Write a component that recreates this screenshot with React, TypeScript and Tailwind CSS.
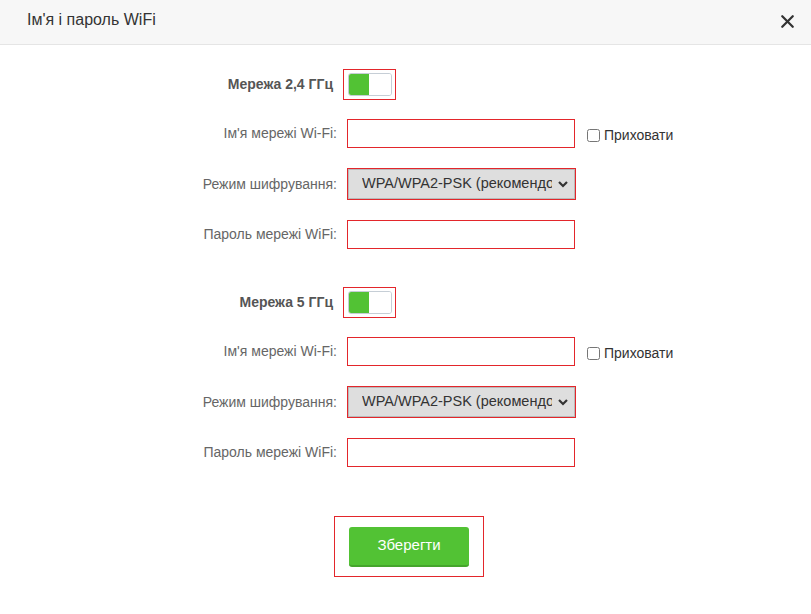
import { X } from "lucide-react";

const FONT = { fontFamily: '"Liberation Sans", Arial, sans-serif' };

function Toggle() {
    return (
        <div className="w-[53px] h-[31px] border border-[#e3262b] flex items-center justify-center">
            <div className="w-[44px] h-[23px] rounded-[3px] border border-[#c6ced6] flex overflow-hidden bg-white">
                <div className="w-[20px] h-full bg-[#52c234]" />
                <div className="flex-1 h-full bg-white" />
            </div>
        </div>
    );
}

function Label({ children }: { children: React.ReactNode }) {
    return <label className="text-right text-[14px] text-[#666] self-center">{children}</label>;
}

function TextField() {
    return <input type="text" className="w-[228px] h-[29px] border border-[#e3262b] bg-white px-2 text-[14px] outline-none" />;
}

function SelectField() {
    return (
        <div className="relative w-[229px] h-[32px] border border-[#e3262b] bg-[#dedede]">
            <select className="appearance-none w-full h-full bg-transparent border border-[#b9b9b9] pl-[13px] pr-[22px] text-[14.5px] text-[#333] outline-none overflow-hidden">
                <option>WPA/WPA2-PSK (рекомендовано)</option>
                <option>WPA2-PSK</option>
                <option>Без шифрування</option>
            </select>
            <svg className="absolute right-[6px] top-[11px] pointer-events-none" width="12" height="8" viewBox="0 0 12 8">
                <path d="M2 2 L6 6 L10 2" stroke="#333" strokeWidth="2.2" fill="none" />
            </svg>
        </div>
    );
}

function NetworkSection({ title }: { title: string }) {
    return (
        <div className="grid grid-cols-[337px_auto] gap-x-[10px]">
            <div className="text-right font-bold text-[14px] text-[#555] self-center pr-[4px]">{title}</div>
            <div className="-ml-[4px]"><Toggle /></div>

            <div className="col-span-2 h-[19px]" />
            <Label>Ім'я мережі Wi-Fi:</Label>
            <div className="flex items-center">
                <TextField />
                <label className="flex items-center gap-[4px] ml-[12px] mt-[4px] text-[14px] text-[#333]">
                    <input type="checkbox" className="w-[13px] h-[13px] m-0" />
                    Приховати
                </label>
            </div>

            <div className="col-span-2 h-[20px]" />
            <Label>Режим шифрування:</Label>
            <SelectField />

            <div className="col-span-2 h-[20px]" />
            <Label>Пароль мережі WiFi:</Label>
            <TextField />
        </div>
    );
}

export default function App() {
    return (
        <div className="w-[811px] h-[614px] bg-white" style={FONT}>
            <div className="h-[45px] bg-[#f7f7f7] border-b border-[#e5e5e5] flex items-center justify-between pl-[27px] pr-[13px]">
                <h1 className="text-[16px] text-[#333] -mt-[4px]">Ім'я і пароль WiFi</h1>
                <X className="w-[21px] h-[21px] text-[#333] -mt-[1px]" strokeWidth={2.6} />
            </div>

            <div className="pt-[24px]">
                <NetworkSection title="Мережа 2,4 ГГц" />
                <div className="h-[38px]" />
                <NetworkSection title="Мережа 5 ГГц" />

                <div className="pl-[334px] mt-[49px]">
                    <div className="w-[150px] h-[61px] border border-[#e3262b] flex items-center justify-center">
                        <button className="w-[120px] h-[40px] rounded-[3px] bg-[#52c234] border-b-2 border-[#45a52c] text-white text-[15px]">
                            Зберегти
                        </button>
                    </div>
                </div>
            </div>
        </div>
    );
}
